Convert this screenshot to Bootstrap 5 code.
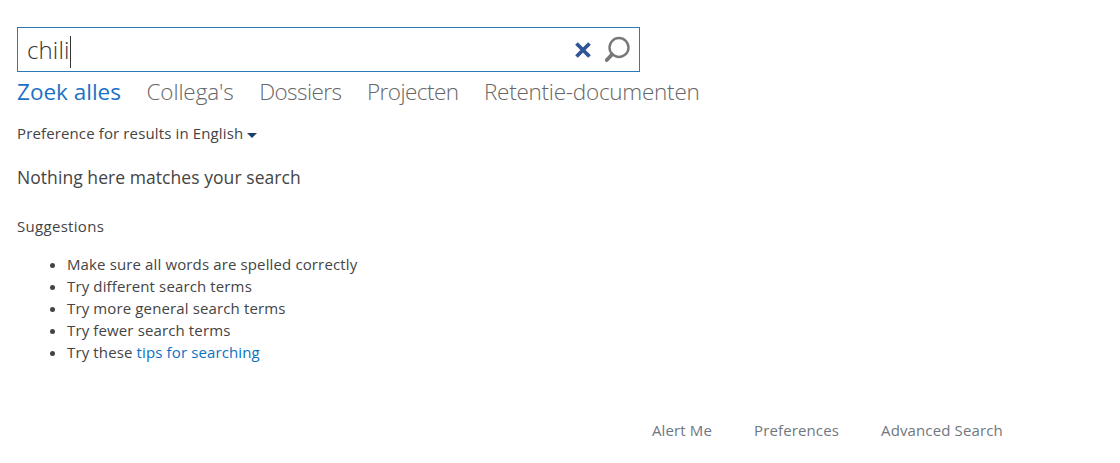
<!DOCTYPE html>
<html lang="en"><head><meta charset="utf-8"><title>Search</title>
<link href="https://cdn.jsdelivr.net/npm/bootstrap@5.3.0/dist/css/bootstrap.min.css" rel="stylesheet">
<style>
html,body{height:463px;overflow:hidden}
body{font-family:"Open Sans","Noto Sans","Liberation Sans",sans-serif;color:#444;background:#fff;font-size:15px;letter-spacing:.13px}
.pagewrap{padding:27px 0 0 17px}
.searchbox{width:623px;height:45px;border:1px solid #2a7ab8;padding:0 8px 0 9px}
.querytext{font-size:24px;font-weight:300;color:#333;line-height:44px;letter-spacing:.15px}
.caretbar{display:inline-block;width:1px;height:32px;background:#333;vertical-align:middle}
.iconpair{gap:12px}
.tabsrow{gap:25.5px;margin-top:5px;height:37px;font-size:22.5px;line-height:30px;color:#777;font-weight:300;letter-spacing:-.55px}
.tabsrow a{color:#666;text-decoration:none}
.tabsrow a.onetab{color:#1a72c4;font-weight:400;letter-spacing:0}
.tabsrow a.widertab{letter-spacing:-.1px}
.tabsrow a.longtab{letter-spacing:-.25px}
.prefline{margin-top:9px;line-height:20px}
.prefline .langsel{margin-left:0}
.arrowdn{display:inline-block;border-left:5px solid transparent;border-right:5px solid transparent;border-top:5px solid #1f3f66;margin-left:4px;vertical-align:1px}
.nomatch{font-size:17.5px;line-height:24px;margin-top:22px;letter-spacing:.06px}
.suggesthead{margin-top:27px;line-height:20px;letter-spacing:.3px}
.suggestlist{margin:17px 0 0;padding-left:50px;line-height:22px}
.suggestlist a{color:#0a72c4;text-decoration:none}
.footlinks{gap:42px;margin:57px 0 0 635px;line-height:20px}
.footlinks a{color:#6f7780;text-decoration:none}
</style></head>
<body><div class="pagewrap">
<div class="searchbox d-flex align-items-center justify-content-between">
<div class="querytext">chili<span class="caretbar"></span></div>
<div class="iconpair d-flex align-items-center">
<svg width="18" height="18" viewBox="0 0 18 18" aria-label="clear"><path d="M2.5 2.5L15.5 15.5M15.5 2.5L2.5 15.5" stroke="#2f5597" stroke-width="3.8" fill="none"/></svg>
<svg width="27" height="27" viewBox="0 0 27 27" aria-label="search"><circle cx="15" cy="11.5" r="9.5" stroke="#777" stroke-width="2.4" fill="none"/><path d="M8 18.5L2.8 24" stroke="#777" stroke-width="3.8" stroke-linecap="round" fill="none"/></svg>
</div></div>
<div class="tabsrow d-flex"><a class="onetab" href="#">Zoek alles</a><a class="widertab" href="#">Collega's</a><a href="#">Dossiers</a><a href="#">Projecten</a><a class="longtab" href="#">Retentie-documenten</a></div>
<div class="prefline">Preference for results in <span class="langsel">English<span class="arrowdn"></span></span></div>
<div class="nomatch">Nothing here matches your search</div>
<div class="suggesthead">Suggestions</div>
<ul class="suggestlist"><li>Make sure all words are spelled correctly</li><li>Try different search terms</li><li>Try more general search terms</li><li>Try fewer search terms</li><li>Try these <a href="#">tips for searching</a></li></ul>
<div class="footlinks d-flex"><a href="#">Alert Me</a><a href="#">Preferences</a><a href="#">Advanced Search</a></div>
</div></body></html>
